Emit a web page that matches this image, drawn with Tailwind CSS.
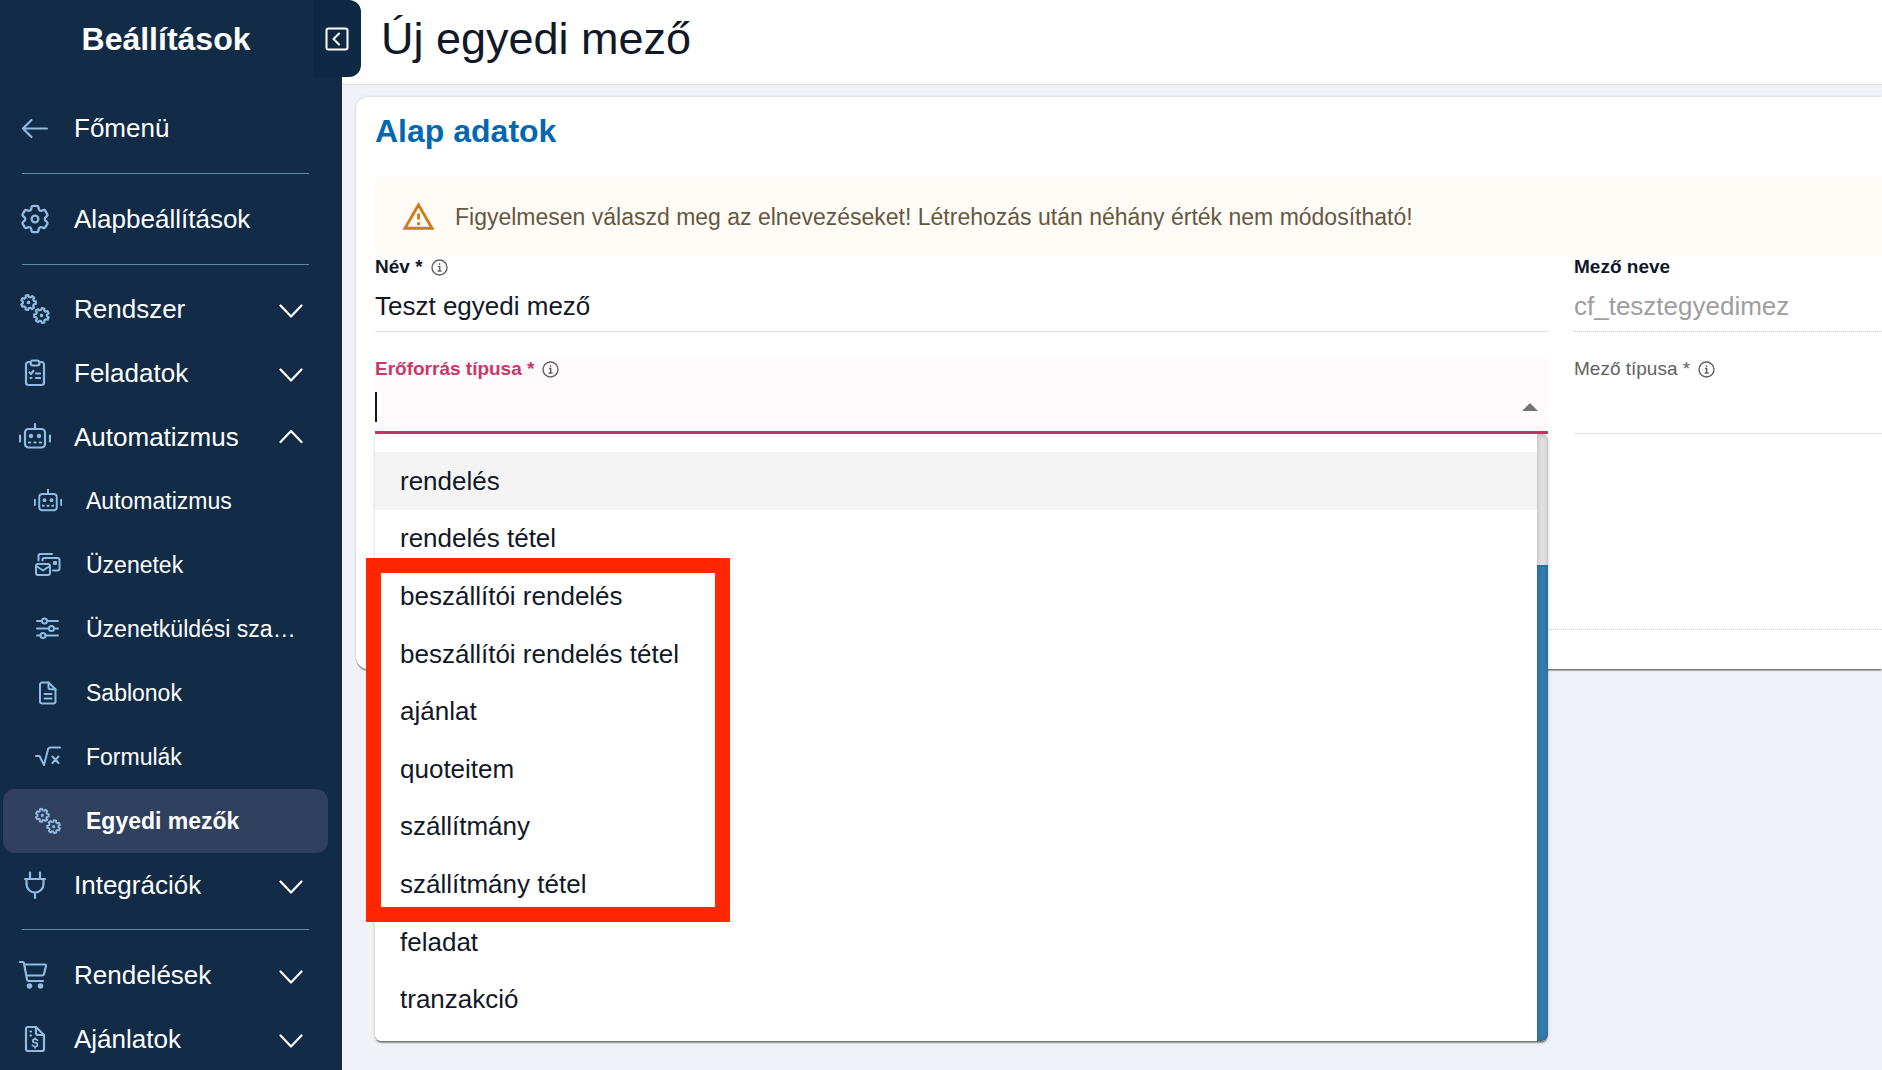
<!DOCTYPE html>
<html lang="hu">
  <head>
    <meta charset="UTF-8" />
    <title>Új egyedi mező</title>
    <meta name="viewport" content="width=device-width, initial-scale=1.0" />
    <script src="https://cdn.jsdelivr.net/npm/@tailwindcss/browser@4"></script>
  </head>
  <body class="flex h-screen overflow-hidden bg-[#f1f2f7] font-['Liberation_Sans',Arial,sans-serif] text-[#111827]">
    <!-- Shared icons -->
    <svg class="hidden">
      <symbol id="gear" viewBox="-9 -9 18 18" overflow="visible">
        <path d="M-1.39-7.88L1.39-7.88 1.75-5.74 3.39-4.95 5.29-6 7.03-3.83 5.58-2.21 5.98-.44 7.99.4 7.37 3.11 5.2 2.99 4.07 4.41 4.67 6.5 2.17 7.7 .91 5.93-.91 5.93-2.17 7.7-4.67 6.5-4.07 4.41-5.2 2.99-7.37 3.11-7.99.4-5.98-.44-5.58-2.21-7.03-3.83-5.29-6-3.39-4.95-1.75-5.74Z" />
        <circle r="0.8" fill="currentColor" />
      </symbol>
      <symbol id="gears" viewBox="0 0 32 32">
        <g transform="rotate(-12 9.5 9.5)"><use href="#gear" x="1.1" y="1.1" width="16.8" height="16.8" /></g>
        <g transform="rotate(12 22.5 22.5)"><use href="#gear" x="14.1" y="14.1" width="16.8" height="16.8" /></g>
      </symbol>
      <symbol id="robot" viewBox="0 0 32 32">
        <rect x="6" y="8" width="20" height="18.5" rx="3.5" />
        <path d="M16 8V3M1 14.5v6M31 14.5v6" />
        <circle cx="12" cy="15" r="2.2" fill="currentColor" stroke="none" />
        <circle cx="20" cy="15" r="2.2" fill="currentColor" stroke="none" />
        <path d="M10 21.5h1.2M15.4 21.5h1.2M20.8 21.5h1.2" />
      </symbol>
      <symbol id="down" viewBox="0 0 24 24">
        <path d="M1.500 8.500L12 19.500 22.500 8.500" />
      </symbol>
      <symbol id="up" viewBox="0 0 24 24">
        <path d="M1.500 17L12 6 22.500 17" />
      </symbol>
      <symbol id="info" viewBox="0 0 17 17">
        <circle cx="8.500" cy="8.500" r="7.500" />
        <path d="M7 7.500h1.700v4.300M6.600 12h4" />
        <path d="M8.500 4.200v1.600" />
      </symbol>
    </svg>

    <aside class="relative z-10 w-[342px] shrink-0 bg-[#122b46] text-white">
      <h2 class="pt-5 pr-2.5 text-center text-[32px]/[38px] font-bold">Beállítások</h2>
      <button type="button" aria-label="Menü összecsukása" class="absolute top-0 -right-[19px] flex h-[77px] w-12 items-center justify-center rounded-r-xl bg-[#0f2944]">
        <svg class="h-6 w-6" viewBox="0 0 24 24" fill="none" stroke="currentColor" stroke-width="2" stroke-linecap="round" stroke-linejoin="round">
          <rect x="1.500" y="1.500" width="21" height="21" rx="2" />
          <path d="M14 6.500L8.500 12l5.500 5.500" />
        </svg>
      </button>

      <nav class="mt-[38px] text-[26px]/[30px]">
        <a href="#" class="flex h-16 items-center gap-[23px] pl-[19px]">
          <svg class="h-8 w-8 text-[#8fbce0]" viewBox="0 0 32 32" fill="none" stroke="currentColor" stroke-width="2.200" stroke-linecap="round" stroke-linejoin="round"><path d="M28 16.500H4M12.500 8L4 16.500l8.500 8.500" /></svg>
          Főmenü
        </a>
        <hr class="my-[13px] mr-[33px] ml-[22px] border-[#5f8ba8]" />
        <a href="#" class="flex h-16 items-center gap-[23px] pl-[19px]">
          <svg class="h-8 w-8 text-[#8fbce0]" viewBox="1 1 22 22" fill="none" stroke="currentColor" stroke-width="1.600" stroke-linejoin="round">
            <path d="M9.594 3.940c.09-.542.56-.94 1.110-.94h2.593c.55 0 1.020.398 1.110.94l.213 1.281c.063.374.313.686.645.87.074.04.147.083.22.127.325.196.72.257 1.075.124l1.217-.456a1.125 1.125 0 0 1 1.370.49l1.296 2.247a1.125 1.125 0 0 1-.26 1.431l-1.003.827c-.293.241-.438.613-.43.992a7.723 7.723 0 0 1 0 .255c-.008.378.137.75.43.991l1.004.827c.424.35.534.955.26 1.430l-1.298 2.247a1.125 1.125 0 0 1-1.369.491l-1.217-.456c-.355-.133-.75-.072-1.076.124a6.470 6.470 0 0 1-.22.128c-.331.183-.581.495-.644.869l-.213 1.281c-.09.543-.56.94-1.110.94h-2.594c-.55 0-1.019-.398-1.110-.94l-.213-1.281c-.062-.374-.312-.686-.644-.87a6.520 6.520 0 0 1-.22-.127c-.325-.196-.72-.257-1.076-.124l-1.217.456a1.125 1.125 0 0 1-1.369-.49l-1.297-2.247a1.125 1.125 0 0 1 .26-1.431l1.004-.827c.292-.24.437-.613.43-.991a6.932 6.932 0 0 1 0-.255c.007-.38-.138-.751-.43-.992l-1.004-.827a1.125 1.125 0 0 1-.26-1.430l1.297-2.247a1.125 1.125 0 0 1 1.370-.491l1.216.456c.356.133.751.072 1.076-.124.072-.044.146-.086.22-.128.332-.183.582-.495.644-.869l.214-1.280Z" />
            <circle cx="12" cy="12" r="2.300" />
          </svg>
          Alapbeállítások
        </a>
        <hr class="mt-[13px] mr-[33px] mb-3 ml-[22px] border-[#5f8ba8]" />
        <button type="button" aria-expanded="false" class="flex h-16 w-full items-center gap-[23px] pr-[39px] pl-[19px]">
          <svg class="h-8 w-8 text-[#8fbce0]" fill="none" stroke="currentColor" stroke-width="2.300" stroke-linejoin="round"><use href="#gears" /></svg>
          Rendszer
          <svg class="ml-auto h-6 w-6" fill="none" stroke="currentColor" stroke-width="2.200" stroke-linecap="round" stroke-linejoin="round"><use href="#down" /></svg>
        </button>
        <button type="button" aria-expanded="false" class="flex h-16 w-full items-center gap-[23px] pr-[39px] pl-[19px]">
          <svg class="h-8 w-8 text-[#8fbce0]" viewBox="0 0 32 32" fill="none" stroke="currentColor" stroke-width="2.200" stroke-linecap="round" stroke-linejoin="round">
            <path d="M11.500 5H9.500a2.500 2.500 0 0 0-2.500 2.500v18A2.500 2.500 0 0 0 9.500 28h13a2.500 2.500 0 0 0 2.500-2.500v-18A2.500 2.500 0 0 0 22.500 5h-2" />
            <rect x="11.500" y="3.500" width="9" height="5" rx="2.500" />
            <path d="M10.500 15.500l1.500 1.500 2.500-3.200M17 16.500h4M17 21h4M11.500 21h1" />
          </svg>
          Feladatok
          <svg class="ml-auto h-6 w-6" fill="none" stroke="currentColor" stroke-width="2.200" stroke-linecap="round" stroke-linejoin="round"><use href="#down" /></svg>
        </button>
        <button type="button" aria-expanded="true" class="flex h-16 w-full items-center gap-[23px] pr-[39px] pl-[19px]">
          <svg class="h-8 w-8 text-[#8fbce0]" fill="none" stroke="currentColor" stroke-width="2.200" stroke-linecap="round"><use href="#robot" /></svg>
          Automatizmus
          <svg class="ml-auto h-6 w-6" fill="none" stroke="currentColor" stroke-width="2.200" stroke-linecap="round" stroke-linejoin="round"><use href="#up" /></svg>
        </button>

        <div class="pr-3.5 pl-[3px] text-[23px]/[28px]">
          <a href="#" class="flex h-16 items-center gap-6 rounded-xl pl-[31px]">
            <svg class="h-7 w-7 shrink-0 text-[#8fbce0]" fill="none" stroke="currentColor" stroke-width="2.200" stroke-linecap="round"><use href="#robot" /></svg>
            Automatizmus
          </a>
          <a href="#" class="flex h-16 items-center gap-6 rounded-xl pl-[31px]">
            <svg class="h-7 w-7 shrink-0 text-[#8fbce0]" viewBox="0 0 28 28" fill="none" stroke="currentColor" stroke-width="2" stroke-linecap="round" stroke-linejoin="round">
              <path d="M4.500 9.500V5a2 2 0 0 1 2-2H18" />
              <path d="M8.500 9.500V9a2 2 0 0 1 2-2h13a2 2 0 0 1 2 2v8.500a2 2 0 0 1-2 2H19" />
              <rect x="2" y="13" width="14" height="11" rx="2" />
              <path d="M3 15.500l6 4 6-4" />
              <rect x="20" y="11" width="2" height="2" fill="currentColor" />
            </svg>
            Üzenetek
          </a>
          <a href="#" class="flex h-16 items-center gap-6 rounded-xl pl-[31px]">
            <svg class="h-7 w-7 shrink-0 text-[#8fbce0]" viewBox="0 0 28 28" fill="none" stroke="currentColor" stroke-width="2" stroke-linecap="round">
              <path d="M3 6h5M13 6h11M3 13.500h12M20 13.500h4M3 20.500h3.500M11.500 20.500H24" />
              <circle cx="10.500" cy="6" r="2.500" />
              <circle cx="17.500" cy="13.500" r="2.500" />
              <circle cx="9" cy="20.500" r="2.500" />
            </svg>
            Üzenetküldési sza…
          </a>
          <a href="#" class="flex h-16 items-center gap-6 rounded-xl pl-[31px]">
            <svg class="h-7 w-7 shrink-0 text-[#8fbce0]" viewBox="0 0 28 28" fill="none" stroke="currentColor" stroke-width="2" stroke-linecap="round" stroke-linejoin="round">
              <path d="M14.500 3.500H8A2 2 0 0 0 6 5.500v17a2 2 0 0 0 2 2h11.500a2 2 0 0 0 2-2V10.200Z" />
              <path d="M14.500 3.500v4.700a2 2 0 0 0 2 2h5M10.500 15h7M10.500 19.500h7" />
            </svg>
            Sablonok
          </a>
          <a href="#" class="flex h-16 items-center gap-6 rounded-xl pl-[31px]">
            <svg class="h-7 w-7 shrink-0 text-[#8fbce0]" viewBox="0 0 28 28" fill="none" stroke="currentColor" stroke-width="2" stroke-linecap="round" stroke-linejoin="round">
              <path d="M2 13h3.500l4.500 9L14 6.500Q14.500 4.500 16.500 4.500H26M18.500 13.500l6 6.500M24.500 13.500l-6 6.500" />
            </svg>
            Formulák
          </a>
          <a href="#" aria-current="page" class="flex h-16 items-center gap-6 rounded-xl bg-[#30405f] pl-[31px] font-bold">
            <svg class="h-7 w-7 shrink-0 text-[#8fbce0]" fill="none" stroke="currentColor" stroke-width="2.300" stroke-linejoin="round"><use href="#gears" /></svg>
            Egyedi mezők
          </a>
        </div>

        <button type="button" aria-expanded="false" class="flex h-16 w-full items-center gap-[23px] pr-[39px] pl-[19px]">
          <svg class="h-8 w-8 text-[#8fbce0]" viewBox="0 0 32 32" fill="none" stroke="currentColor" stroke-width="2.200" stroke-linecap="round">
            <path d="M6 10h20M11 9V3.500M21 9V3.500M7.500 10v5a8.500 8.500 0 0 0 17 0v-5M16 24v5" />
          </svg>
          Integrációk
          <svg class="ml-auto h-6 w-6" fill="none" stroke="currentColor" stroke-width="2.200" stroke-linecap="round" stroke-linejoin="round"><use href="#down" /></svg>
        </button>
        <hr class="mt-3 mr-[33px] mb-[13px] ml-[22px] border-[#5f8ba8]" />
        <button type="button" aria-expanded="false" class="flex h-16 w-full items-center gap-[23px] pr-[39px] pl-[19px]">
          <svg class="h-8 w-8 text-[#8fbce0]" viewBox="0 0 32 32" fill="none" stroke="currentColor" stroke-width="2.200" stroke-linecap="round" stroke-linejoin="round">
            <path d="M1 3h2.500a1.500 1.500 0 0 1 1.500 1.200L8 20.500a1.800 1.800 0 0 0 1.800 1.500H24M5.500 5.500h20.500a1 1 0 0 1 1 1.200l-2 8.300a2 2 0 0 1-2 1.500H7.500" />
            <circle cx="10.500" cy="27" r="1.700" fill="currentColor" />
            <circle cx="21.500" cy="27" r="1.700" fill="currentColor" />
          </svg>
          Rendelések
          <svg class="ml-auto h-6 w-6" fill="none" stroke="currentColor" stroke-width="2.200" stroke-linecap="round" stroke-linejoin="round"><use href="#down" /></svg>
        </button>
        <button type="button" aria-expanded="false" class="flex h-16 w-full items-center gap-[23px] pr-[39px] pl-[19px]">
          <svg class="h-8 w-8 text-[#8fbce0]" viewBox="0 0 32 32" fill="none" stroke="currentColor" stroke-width="2.200" stroke-linecap="round" stroke-linejoin="round">
            <path d="M17 4H9a2 2 0 0 0-2 2v20a2 2 0 0 0 2 2h14a2 2 0 0 0 2-2V12Z" />
            <path d="M17 4v6a2 2 0 0 0 2 2h6M11.500 8.500h.5M11.500 12.500h.5" />
            <path d="M18.500 17.300c-.5-.9-1.300-1.200-2.500-1.200-3 0-3 3.400 0 3.600 3.200.3 3.200 3.800 0 3.800-1.300 0-2.200-.4-2.700-1.300M16 15v1M16 24v.8" stroke-width="1.700" />
          </svg>
          Ajánlatok
          <svg class="ml-auto h-6 w-6" fill="none" stroke="currentColor" stroke-width="2.200" stroke-linecap="round" stroke-linejoin="round"><use href="#down" /></svg>
        </button>
      </nav>
    </aside>

    <main class="min-w-0 flex-1">
      <header class="flex h-[85px] items-start border-b border-[#dedede] bg-white pt-3 pl-[39px]">
        <h1 class="text-[45px]/[54px]">Új egyedi mező</h1>
      </header>

      <form class="mt-3 ml-3.5 flex h-[572px] flex-col rounded-l-xl bg-white pl-[19px] shadow-[0_3px_1px_-1px_rgba(0,0,0,0.3),0_1px_1px_rgba(0,0,0,0.2),0_0_3px_rgba(0,0,0,0.16)]">
        <h2 class="pt-[15px] text-[32px]/[38px] font-bold text-[#0468b1]">Alap adatok</h2>

        <div role="alert" class="mt-7 flex h-[77px] shrink-0 items-center gap-[19px] rounded-l-md bg-[#fffcf7] pl-[26px] text-[23px]/[28px] text-[#66573f]">
          <svg class="h-[35px] w-[35px] text-[#d17a16]" viewBox="0 0 24 24" fill="currentColor"><path d="M12 5.990L19.530 19H4.470L12 5.990M12 2L1 21h22L12 2zm1 14h-2v2h2v-2zm0-6h-2v4h2v-4z" /></svg>
          Figyelmesen válaszd meg az elnevezéseket! Létrehozás után néhány érték nem módosítható!
        </div>

        <div class="grid grid-cols-[minmax(0,1173fr)_minmax(0,308fr)] gap-x-[26px] gap-y-[25px]">
          <div class="flex h-[77px] flex-col border-b border-[#dedede]">
            <div class="flex items-center gap-2 text-[19px]/[24px]">
              <label for="name" class="font-bold">Név *</label>
              <svg class="h-[17px] w-[17px] text-[#616161]" fill="none" stroke="currentColor" stroke-width="1.400"><use href="#info" /></svg>
            </div>
            <input id="name" type="text" value="Teszt egyedi mező" class="min-h-0 flex-1 pt-0.5 text-[26px] outline-none" />
          </div>

          <div class="flex h-[77px] flex-col border-b border-dotted border-[#d0d0d0]">
            <label for="fieldName" class="text-[19px]/[24px] font-bold">Mező neve</label>
            <input id="fieldName" type="text" value="cf_tesztegyedimez" disabled class="min-h-0 flex-1 pt-0.5 text-[26px] text-[#9e9e9e]" />
          </div>

          <div class="relative flex h-[77px] flex-col rounded-t-md border-b-3 border-[#c23565] bg-[#fffafc]">
            <div class="flex items-center gap-2 text-[19px]/[24px]">
              <label for="resource" class="font-bold text-[#c9386a]">Erőforrás típusa *</label>
              <svg class="h-[17px] w-[17px] text-[#616161]" fill="none" stroke="currentColor" stroke-width="1.400"><use href="#info" /></svg>
            </div>
            <div class="flex flex-1 items-center pt-0.5 pr-2.5">
              <span class="h-[30px] w-0.5 bg-[#0f172a]"></span>
              <input id="resource" type="text" role="combobox" aria-expanded="true" aria-controls="resourceList" class="min-w-0 flex-1 text-[26px] caret-transparent outline-none" />
              <svg class="h-2 w-4 text-[#757575]" viewBox="0 0 16 8" fill="currentColor"><path d="M0 8l8-8 8 8z" /></svg>
            </div>

            <!-- Open list of resource types -->
            <div class="absolute inset-x-0 top-full mt-[3px] flex h-[607px] rounded-md bg-white shadow-[0_3px_1px_-1px_rgba(0,0,0,0.3),0_1px_1px_rgba(0,0,0,0.2),0_1px_4px_rgba(0,0,0,0.16)]">
              <ul id="resourceList" role="listbox" aria-label="Erőforrás típusa" class="grid flex-1 auto-rows-fr pt-[18px] pb-[13px] text-[26px]/[30px]">
                <li role="option" class="flex items-center bg-[#f4f4f4] pl-[25px]">rendelés</li>
                <li role="option" class="flex items-center pl-[25px]">rendelés tétel</li>
                <li role="option" class="flex items-center pl-[25px]">beszállítói rendelés</li>
                <li role="option" class="flex items-center pl-[25px]">beszállítói rendelés tétel</li>
                <li role="option" class="flex items-center pl-[25px]">ajánlat</li>
                <li role="option" class="flex items-center pl-[25px]">quoteitem</li>
                <li role="option" class="flex items-center pl-[25px]">szállítmány</li>
                <li role="option" class="flex items-center pl-[25px]">szállítmány tétel</li>
                <li role="option" class="flex items-center pl-[25px]">feladat</li>
                <li role="option" class="flex items-center pl-[25px]">tranzakció</li>
              </ul>
              <div class="flex w-[11px] flex-col overflow-hidden rounded-r-md bg-[#e0e0e0] shadow-[inset_0_0_5px_rgba(0,0,0,0.2)]">
                <div class="mt-[131px] flex-1 rounded-br-md bg-[#347aad] shadow-[inset_0_0_5px_rgba(0,0,0,0.2)]"></div>
              </div>
              <div class="pointer-events-none absolute top-[124px] -left-[9px] h-[364px] w-[364px] border-15 border-[#ff2600]"></div>
            </div>
          </div>

          <div class="flex h-[77px] flex-col border-b border-[#dedede]">
            <div class="flex items-center gap-2 text-[19px]/[24px] text-[#616161]">
              <label for="fieldType">Mező típusa *</label>
              <svg class="h-[17px] w-[17px]" fill="none" stroke="currentColor" stroke-width="1.400"><use href="#info" /></svg>
            </div>
            <select id="fieldType" class="min-h-0 flex-1 appearance-none text-[26px] outline-none">
              <option value=""></option>
            </select>
          </div>
        </div>

        <hr class="mt-auto mb-[39px] border-dotted border-[#d0d0d0]" />
      </form>
    </main>
  </body>
</html>
